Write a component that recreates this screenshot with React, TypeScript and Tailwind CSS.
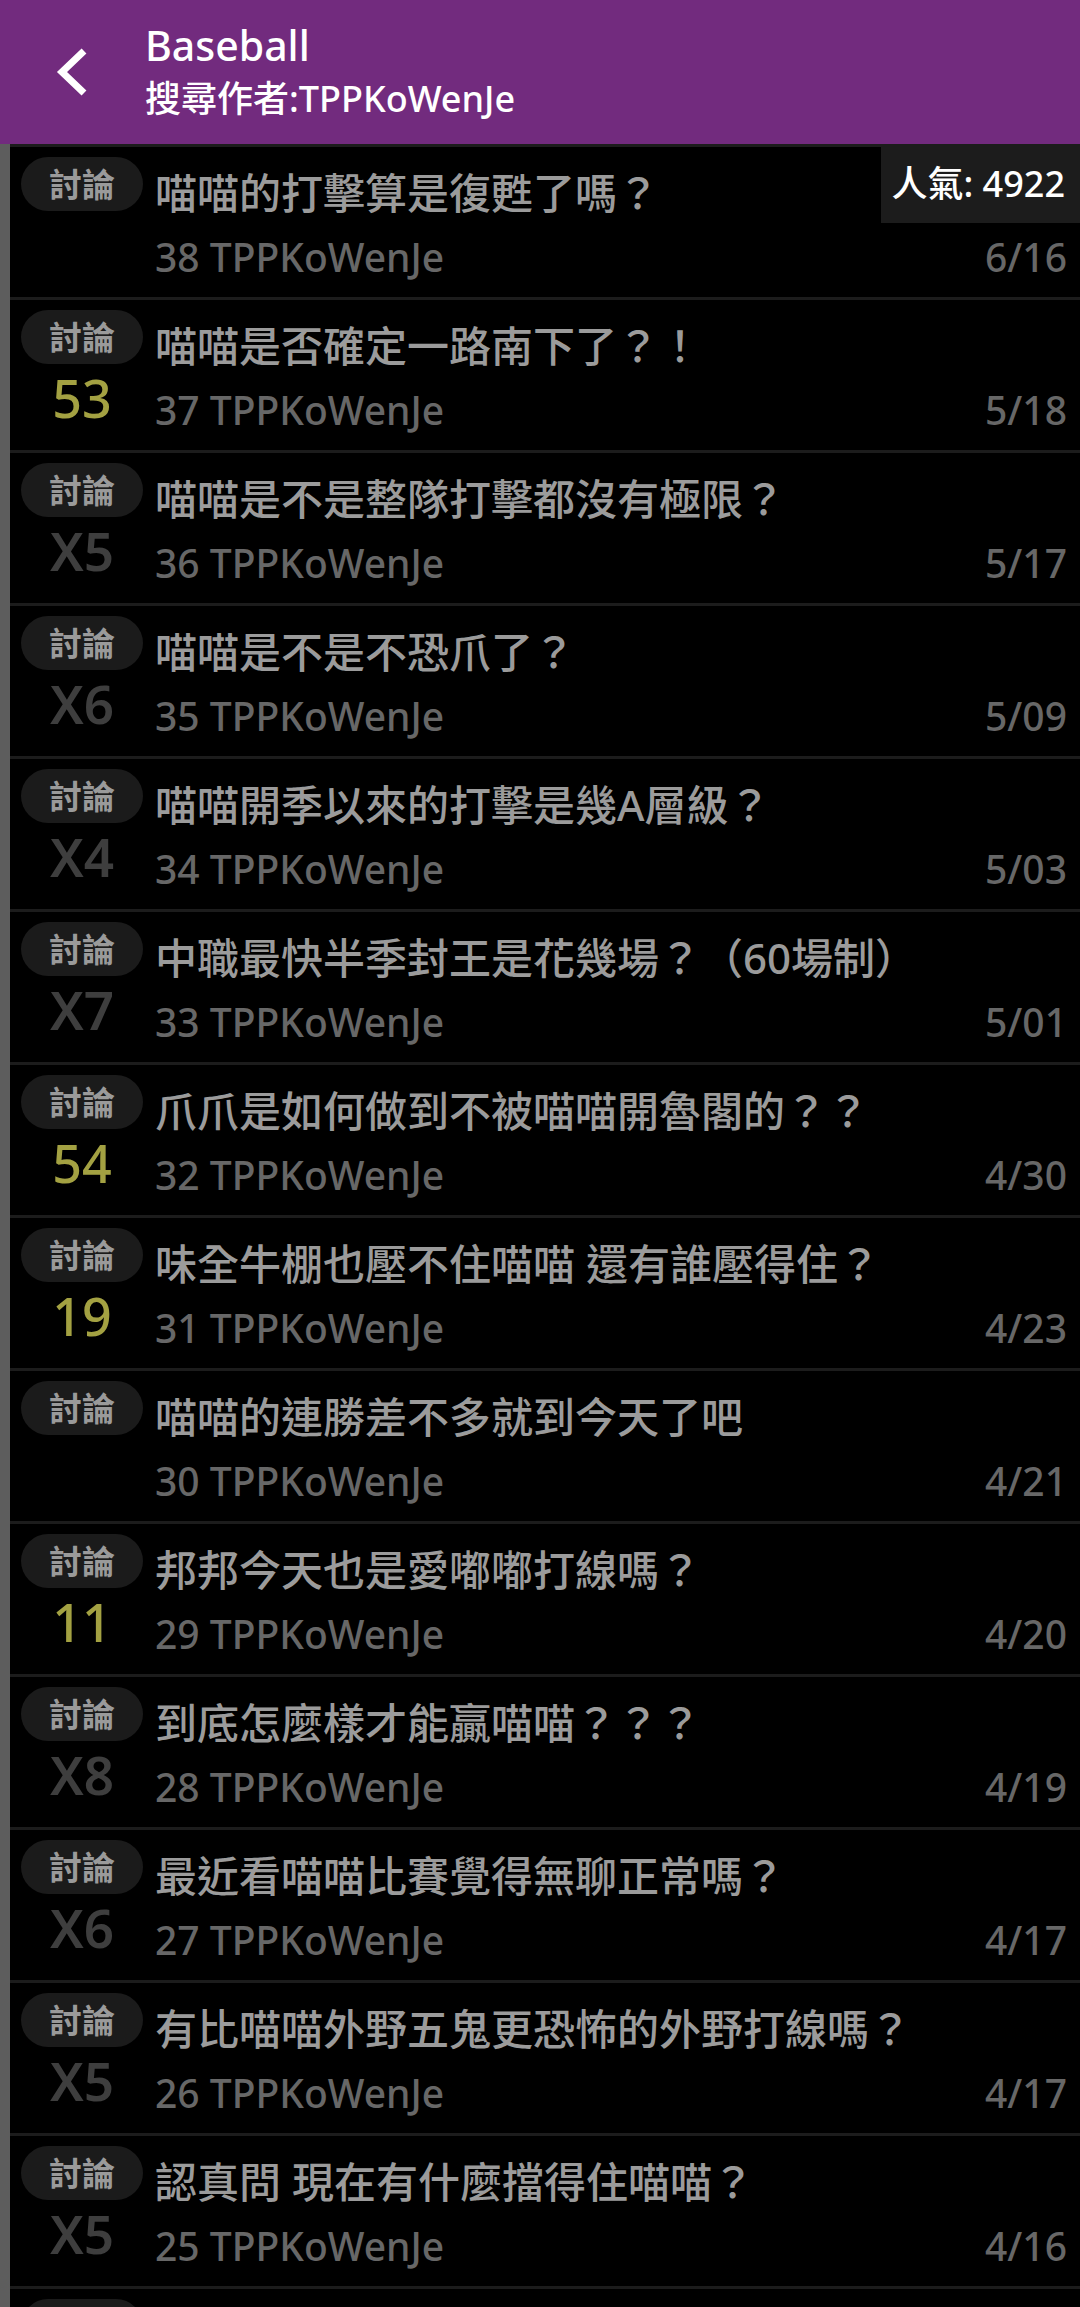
const posts = [
  { score: '', title: '喵喵的打擊算是復甦了嗎？', no: 38, date: '6/16' },
  { score: '53', title: '喵喵是否確定一路南下了？！', no: 37, date: '5/18' },
  { score: 'X5', title: '喵喵是不是整隊打擊都沒有極限？', no: 36, date: '5/17' },
  { score: 'X6', title: '喵喵是不是不恐爪了？', no: 35, date: '5/09' },
  { score: 'X4', title: '喵喵開季以來的打擊是幾A層級？', no: 34, date: '5/03' },
  { score: 'X7', title: '中職最快半季封王是花幾場？（60場制）', no: 33, date: '5/01' },
  { score: '54', title: '爪爪是如何做到不被喵喵開魯閣的？？', no: 32, date: '4/30' },
  { score: '19', title: '味全牛棚也壓不住喵喵 還有誰壓得住？', no: 31, date: '4/23' },
  { score: '', title: '喵喵的連勝差不多就到今天了吧', no: 30, date: '4/21' },
  { score: '11', title: '邦邦今天也是愛嘟嘟打線嗎？', no: 29, date: '4/20' },
  { score: 'X8', title: '到底怎麼樣才能贏喵喵？？？', no: 28, date: '4/19' },
  { score: 'X6', title: '最近看喵喵比賽覺得無聊正常嗎？', no: 27, date: '4/17' },
  { score: 'X5', title: '有比喵喵外野五鬼更恐怖的外野打線嗎？', no: 26, date: '4/17' },
  { score: 'X5', title: '認真問 現在有什麼擋得住喵喵？', no: 25, date: '4/16' },
]

const Tag = () => (
  <div className="flex h-[54px] w-[122px] items-center justify-center rounded-full bg-[#1b1b1b] text-[33px] font-semibold leading-none text-[#9a9a9a]">
    討論
  </div>
)

const PostRow = ({ post }: { post: (typeof posts)[number] }) => {
  const isBoo = post.score.startsWith('X')
  return (
    <div className="flex h-[153px] border-t-[3px] border-[#1c1c1c] pl-[11px] pr-[13px]">
      {/* 左: 分類と推文数 */}
      <div className="flex w-[122px] shrink-0 flex-col items-center pt-[10px]">
        <Tag />
        <div
          className={
            isBoo
              ? 'text-[53px] font-semibold leading-[68px] text-[#3e3e3e]'
              : 'text-[52px] font-medium leading-[68px] text-[#a3a142]'
          }
        >
          {post.score}
        </div>
      </div>
      {/* 右: タイトル */}
      <div className="ml-[12px] flex min-w-0 flex-1 flex-col pt-[13px] font-medium">
        <div className="truncate text-[42px] leading-[65px] text-[#9b9b9b]">{post.title}</div>
        <div className="flex justify-between text-[39px] leading-[64px] text-[#676767]">
          <span>{post.no} TPPKoWenJe</span>
          <span>{post.date}</span>
        </div>
      </div>
    </div>
  )
}

const App = () => {
  return (
    <div className="h-[2307px] w-[1080px] overflow-hidden bg-black font-['Noto_Sans','Noto_Sans_CJK_TC',sans-serif]">
      {/* ヘッダー */}
      <div className="flex h-[144px] bg-[#722b7e]">
        <div className="flex w-[145px] shrink-0 items-center justify-center pr-[1px]">
          <svg width="32" height="50" viewBox="0 0 32 50" fill="none">
            <polyline
              points="28,4 6,25 28,46"
              stroke="white"
              strokeWidth="7"
              strokeLinejoin="miter"
            />
          </svg>
        </div>
        <div className="flex flex-col pt-[20px] text-white">
          <div className="text-[41px] font-medium leading-[50px]">Baseball</div>
          <div className="mt-[6px] text-[36px] font-medium leading-[46px]">搜尋作者:TPPKoWenJe</div>
        </div>
      </div>
      {/* 一覧 */}
      <div className="relative border-l-[10px] border-[#5d5d5d]">
        <div className="absolute right-0 top-0 z-10 flex h-[79px] w-[199px] items-center justify-end whitespace-nowrap bg-[#1c1c1c] pr-[15px] text-[36px] font-medium text-white">
          人氣: 4922
        </div>
        {posts.map((post) => (
          <PostRow key={post.no} post={post} />
        ))}
        {/* 画面下端で切れている次の行 */}
        <div className="h-[40px] border-t-[3px] border-[#1c1c1c] pl-[11px] pt-[10px]">
          <div className="h-[54px] w-[122px] rounded-full bg-[#1b1b1b]" />
        </div>
      </div>
    </div>
  )
}

export default App
